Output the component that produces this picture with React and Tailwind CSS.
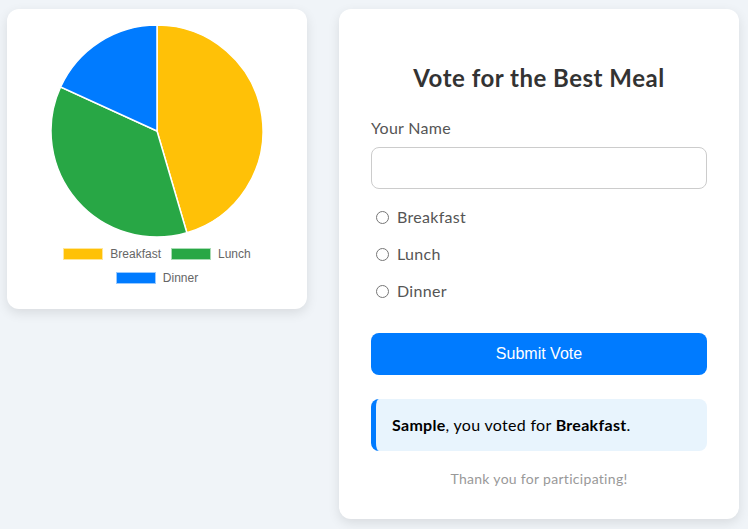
import React from 'react';

const votes = [
  { name: 'Breakfast', color: '#ffc107' },
  { name: 'Lunch', color: '#28a745' },
  { name: 'Dinner', color: '#007bff' },
];

const PieChart = () => (
  <svg width="260" height="216" viewBox="-130 -108 260 216" className="block">
    <path d="M0,0 L0,-106 A106,106 0 0 1 29.86,101.71 Z" fill="#ffc107" stroke="#fff" strokeWidth="1.5" />
    <path d="M0,0 L29.86,101.71 A106,106 0 0 1 -96.42,-44.03 Z" fill="#28a745" stroke="#fff" strokeWidth="1.5" />
    <path d="M0,0 L-96.42,-44.03 A106,106 0 0 1 0,-106 Z" fill="#007bff" stroke="#fff" strokeWidth="1.5" />
  </svg>
);

const LegendItem = ({ name, color }) => (
  <div className="flex items-center gap-[7px]">
    <span className="inline-block w-[40px] h-[12px] border border-white/60" style={{ backgroundColor: color }} />
    <span>{name}</span>
  </div>
);

const App = () => {
  return (
    <div className="min-h-screen bg-[#f0f4f8] pt-[9px] font-['Lato',sans-serif] tracking-[0.3px]">
      <div className="flex justify-center items-start gap-8 pr-[2px]">
        {/* Chart card */}
        <div className="w-[300px] h-[300px] bg-white rounded-xl shadow-[0_4px_12px_rgba(0,0,0,0.1)] px-5 pt-[14px] tracking-normal">
          <PieChart />
          <div className="font-['Liberation_Sans',Arial,sans-serif] text-[12px] text-[#666] mt-[6px] flex flex-col items-center gap-[6px]">
            <div className="flex gap-[10px]">
              <LegendItem {...votes[0]} />
              <LegendItem {...votes[1]} />
            </div>
            <LegendItem {...votes[2]} />
          </div>
        </div>

        {/* Vote form card */}
        <div className="w-[400px] bg-white rounded-xl shadow-[0_4px_12px_rgba(0,0,0,0.1)] p-8 pb-[31px]">
          <h2 className="mt-5 text-2xl font-bold text-[#333] text-center leading-[34px] tracking-[0.5px]">Vote for the Best Meal</h2>

          <label className="block mt-[22px] mb-2 text-base leading-[22px] text-[#555]">Your Name</label>
          <input
            type="text"
            className="block w-full h-[42px] px-3 border border-[#ccc] rounded-lg outline-none"
          />

          <div className="mt-[17px] flex flex-col gap-[15px] text-[#555] leading-[22px]">
            {votes.map((v) => (
              <label key={v.name} className="flex items-center">
                <input type="radio" name="meal" className="ml-[5px] mr-[8px] w-[13px] h-[13px]" />
                {v.name}
              </label>
            ))}
          </div>

          <button className="mt-[31px] w-full h-[42px] bg-[#007bff] text-white rounded-lg font-['Liberation_Sans',Arial,sans-serif] text-base tracking-normal">
            Submit Vote
          </button>

          <div className="mt-6 bg-[#e8f4fd] border-l-[5px] border-[#007bff] rounded-lg py-[15px] pl-4 leading-[22px] text-black">
            <strong>Sample</strong>, you voted for <strong>Breakfast</strong>.
          </div>

          <p className="mt-[18px] text-center text-sm text-[#999] leading-[19px]">Thank you for participating!</p>
        </div>
      </div>
    </div>
  );
};

export default App;
